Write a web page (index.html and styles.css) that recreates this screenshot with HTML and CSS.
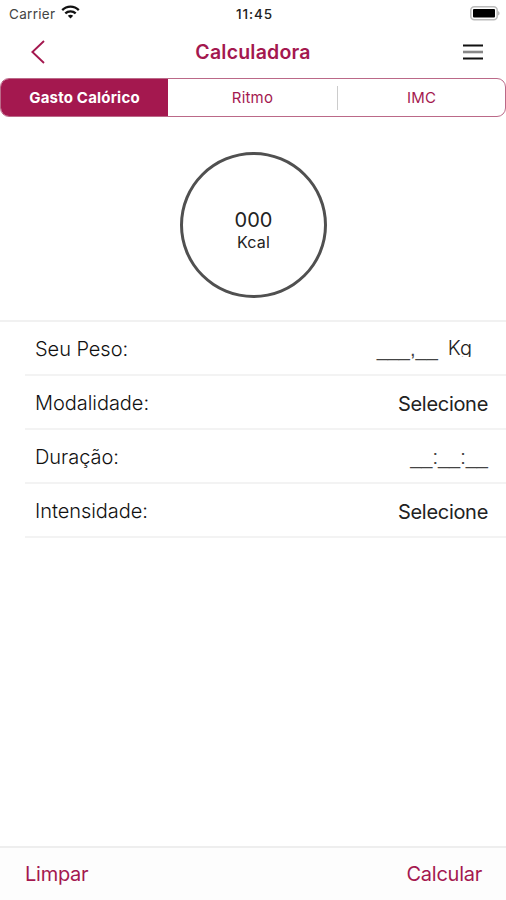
FILE: index.html
```html
<!DOCTYPE html>
<html lang="pt-BR">
<head>
    <meta charset="UTF-8">
    <meta name="viewport" content="width=device-width, initial-scale=1.0">
    <title>Calculadora</title>
    <link rel="stylesheet" href="styles.css">
</head>
<body>
    <div class="status-bar">
        <div class="carrier">
            <span class="carrier-name">Carrier</span>
            <svg class="wifi" width="19" height="14" viewBox="0 0 19 14" fill="none" stroke="#111" stroke-width="2.3">
                <path d="M1.2 5.1C5.8.5 13.2.5 17.8 5.1"/>
                <path d="M4.3 8.4c2.9-2.8 7.5-2.8 10.4 0"/>
                <path d="M6.8 10.7c1.6-1.3 3.8-1.3 5.4 0L9.5 13.4z" fill="#111" stroke="none"/>
            </svg>
        </div>
        <span class="time">11:45</span>
        <svg class="battery" width="30" height="15" viewBox="0 0 30 15">
            <rect x=".8" y=".8" width="26.4" height="13" rx="3.5" fill="#fff" stroke="#bbb" stroke-width="1.5"/>
            <rect x="3" y="3" width="22" height="8.6" rx="1" fill="#000"/>
            <path d="M28.2 5v4.6c1.8-.8 1.8-3.8 0-4.6z" fill="#aaa"/>
        </svg>
    </div>

    <header class="nav-bar">
        <svg class="back" width="14" height="24" viewBox="0 0 14 24" fill="none" stroke="#a4184f" stroke-width="1.9">
            <path d="M13 1L1.4 12 13 23"/>
        </svg>
        <h1>Calculadora</h1>
        <svg class="menu" width="20" height="16" viewBox="0 0 20 16">
            <path d="M0 1.5h20M0 14.5h20" stroke="#111" stroke-width="2"/>
            <path d="M0 8h20" stroke="#888" stroke-width="2.6"/>
        </svg>
    </header>

    <nav class="tabs">
        <a class="tab active">Gasto Calórico</a>
        <a class="tab">Ritmo</a>
        <a class="tab last">IMC</a>
    </nav>

    <section class="result">
        <div class="circle">
            <span class="value">000</span>
            <span class="unit">Kcal</span>
        </div>
    </section>

    <main class="form">
        <div class="row">
            <span class="label">Seu Peso:</span>
            <span class="peso"><span class="blank">___,__</span><span class="kg">Kg</span></span>
        </div>
        <div class="row">
            <span class="label">Modalidade:</span>
            <span class="select">Selecione</span>
        </div>
        <div class="row">
            <span class="label">Duração:</span>
            <span class="blank">__:__:__</span>
        </div>
        <div class="row">
            <span class="label">Intensidade:</span>
            <span class="select">Selecione</span>
        </div>
    </main>

    <footer class="toolbar">
        <span class="action">Limpar</span>
        <span class="action">Calcular</span>
    </footer>
</body>
</html>
```
FILE: styles.css
```css
* {
    box-sizing: border-box;
}

body {
    display: flex;
    flex-direction: column;
    height: 900px;
    margin: 0;
    overflow: hidden;
    background: #fff;
    color: #222;
    font-family: Inter, "Liberation Sans", sans-serif;
}

.status-bar {
    display: grid;
    grid-template-columns: 1fr auto 1fr;
    align-items: center;
    height: 27px;
    padding: 0 6px 0 9px;
}

.carrier {
    display: flex;
    align-items: center;
    gap: 6px;
}

.carrier-name {
    color: #444;
    font-size: 13.5px;
    letter-spacing: 0.3px;
}

.wifi {
    margin-bottom: 3px;
}

.time {
    color: #222;
    font-size: 13.5px;
    font-weight: 500;
    letter-spacing: 0.9px;
}

.battery {
    justify-self: end;
}

.nav-bar {
    display: grid;
    grid-template-columns: 1fr auto 1fr;
    align-items: center;
    height: 51px;
    padding: 0 23px 2px;
}

.back {
    margin-left: 8px;
}

h1 {
    margin: 0;
    color: #a4184f;
    font-size: 19.5px;
    font-weight: 600;
    letter-spacing: 0.2px;
}

.menu {
    justify-self: end;
}

.tabs {
    display: grid;
    grid-template-columns: 167px 169px 1fr;
    height: 39px;
    border: 1px solid #bb6988;
    border-radius: 9px;
    overflow: hidden;
}

.tab {
    display: flex;
    align-items: center;
    justify-content: center;
    color: #a4184f;
    font-size: 15px;
    letter-spacing: 0.2px;
}

.tab.active {
    background: #a4184f;
    color: #fff;
    font-weight: 700;
}

.tab.last {
    height: 24px;
    align-self: center;
    border-left: 1px solid #ccc;
}

.result {
    display: flex;
    justify-content: center;
    height: 203px;
    padding: 35px 0 0 1px;
}

.circle {
    display: flex;
    flex-direction: column;
    align-items: center;
    width: 147px;
    height: 146px;
    padding-top: 53px;
    border: 3px solid #505050;
    border-radius: 50%;
}

.value {
    font-size: 20px;
    line-height: 24px;
}

.unit {
    font-size: 16px;
    line-height: 20px;
    letter-spacing: 0.2px;
}

.form {
    border-top: 2px solid #f1f1f1;
}

.row {
    display: flex;
    align-items: center;
    justify-content: space-between;
    height: 54px;
    margin-left: 25px;
    padding: 2px 18px 0 10px;
    border-bottom: 2px solid #f3f3f3;
    font-size: 20px;
    font-weight: 300;
}

.label {
    color: #111;
    letter-spacing: -0.05px;
}

.select {
    padding-top: 1px;
    font-weight: 400;
    letter-spacing: -0.3px;
}

.blank {
    color: #444;
    font-family: "Liberation Sans", Arial, sans-serif;
    font-weight: 400;
}

.peso {
    display: flex;
    align-items: center;
    gap: 10px;
    margin-right: 16px;
}

/* the unit box is too short for the g descender */
.kg {
    height: 20px;
    margin-bottom: 4px;
    line-height: 22px;
    overflow: hidden;
}

.toolbar {
    display: flex;
    justify-content: space-between;
    height: 54px;
    margin-top: auto;
    padding: 14px 24px 0 25px;
    border-top: 2px solid #eee;
    background: #fdfdfd;
}

.action {
    color: #a4184f;
    font-size: 20px;
    line-height: 24px;
    letter-spacing: -0.25px;
}
```
